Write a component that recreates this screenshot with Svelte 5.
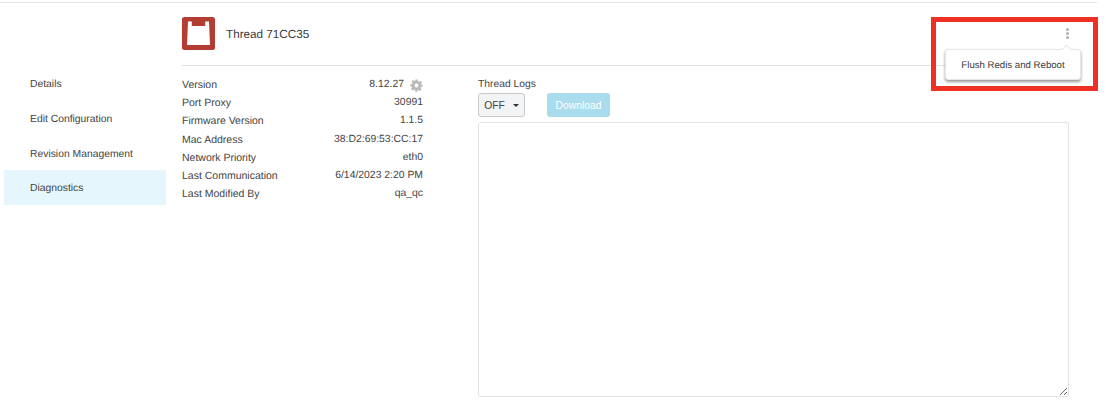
<script>
  const nav = ['Details', 'Edit Configuration', 'Revision Management', 'Diagnostics'];
  const rows = [
    ['Version', '8.12.27'],
    ['Port Proxy', '30991'],
    ['Firmware Version', '1.1.5'],
    ['Mac Address', '38:D2:69:53:CC:17'],
    ['Network Priority', 'eth0'],
    ['Last Communication', '6/14/2023 2:20 PM'],
    ['Last Modified By', 'qa_qc']
  ];
</script>

<div class="page">
  <div class="topline"></div>
  <div class="layout">
    <nav class="sidebar">
      {#each nav as item}
        <div class="nav-item" class:active={item === 'Diagnostics'}>{item}</div>
      {/each}
    </nav>
    <main class="main">
      <header class="header">
        <div class="device">
          <svg viewBox="0 0 33 33" width="33" height="33" aria-hidden="true">
            <rect width="33" height="33" rx="2.5" fill="#b33c33" />
            <path d="M6 4.5h3.8V9h13.4V4.5H27L28 28H5Z" fill="#fff" />
          </svg>
          <span class="title">Thread 71CC35</span>
        </div>
        <div class="dots"><i></i><i></i><i></i></div>
      </header>
      <div class="content">
        <section class="details">
          {#each rows as [label, value]}
            <div class="row">
              <span>{label}</span>
              <span class="value">
                {value}
                {#if label === 'Version'}
                  <svg class="gear" viewBox="0 0 24 24" width="13" height="13" aria-hidden="true">
                    <path fill-rule="evenodd" fill="#bababa" d="M10 1h4l.7 3.2 1.9.8 2.8-1.8 2.8 2.8-1.8 2.8.8 1.9L23.5 10v4l-3.2.7-.8 1.9 1.8 2.8-2.8 2.8-2.8-1.8-1.9.8L13.9 23.5h-4l-.7-3.3-1.9-.8-2.8 1.8-2.8-2.8 1.8-2.8-.8-1.9L.5 14v-4l3.2-.7.8-1.9L2.7 4.6l2.8-2.8 2.8 1.8 1.9-.8ZM12 8.5a3.5 3.5 0 1 0 0 7 3.5 3.5 0 0 0 0-7Z" />
                  </svg>
                {/if}
              </span>
            </div>
          {/each}
        </section>
        <section class="logs">
          <div class="logs-label">Thread Logs</div>
          <div class="controls">
            <button class="select">OFF <span class="caret"></span></button>
            <button class="download">Download</button>
          </div>
          <textarea class="log-box"></textarea>
        </section>
      </div>
    </main>
  </div>

  <div class="highlight"></div>
  <div class="menu">
    <span class="arrow"></span>
    Flush Redis and Reboot
  </div>
</div>

<style>
  :global(body) {
    margin: 0;
    background: #fff;
  }
  .page {
    position: relative;
    width: 1106px;
    height: 411px;
    overflow: hidden;
    background: #fff;
    color: #444;
    font-family: "Liberation Sans", Arial, sans-serif;
    font-size: 10.5px;
    text-rendering: geometricPrecision;
  }
  .topline {
    height: 1px;
    width: 1097px;
    margin-top: 2px;
    background: #e4e4e4;
  }
  .layout {
    display: flex;
  }
  .sidebar {
    width: 162px;
    margin-left: 4px;
    padding-top: 62px;
    flex: none;
  }
  .nav-item {
    height: 35px;
    line-height: 40px;
    padding-left: 26px;
    font-size: 10.35px;
  }
  .nav-item.active {
    background: #e5f7fc;
    line-height: 37px;
  }
  .main {
    width: 887px;
    margin-left: 16px;
  }
  .header {
    height: 63px;
    box-sizing: border-box;
    border-bottom: 1px solid #e2e2e2;
    display: flex;
    justify-content: space-between;
    padding-top: 14px;
  }
  .device {
    display: flex;
    align-items: flex-start;
    gap: 11px;
  }
  .title {
    font-size: 11.7px;
    line-height: 35px;
    color: #3a3a3a;
  }
  .dots {
    display: flex;
    flex-direction: column;
    gap: 1px;
    padding: 11px 0 0;
    margin-right: 0;
  }
  .dots i {
    width: 3px;
    height: 3px;
    border-radius: 50%;
    background: #b0b0b0;
  }
  .content {
    display: flex;
    padding-top: 9px;
  }
  .details {
    width: 241px;
    margin-right: 55px;
    padding-top: 1px;
    flex: none;
  }
  .row {
    height: 18.2px;
    line-height: 18.2px;
    display: flex;
    justify-content: space-between;
  }
  .value {
    display: flex;
    align-items: center;
    gap: 6px;
    font-size: 10.4px;
  }
  .gear {
    flex: none;
  }
  .logs {
    flex: 1;
  }
  .logs-label {
    height: 18px;
    line-height: 20px;
    font-size: 10.3px;
  }
  .controls {
    display: flex;
    gap: 22px;
    height: 29px;
  }
  button {
    font: inherit;
    box-sizing: border-box;
    padding: 0;
  }
  .select {
    width: 47px;
    height: 24px;
    font-size: 10.3px;
    background: #f3f4f6;
    border: 1px solid #c9c9c9;
    border-radius: 3px;
    color: #444;
  }
  .caret {
    display: inline-block;
    width: 0;
    height: 0;
    margin-left: 5px;
    vertical-align: 2px;
    border: 3px solid transparent;
    border-top-color: #333;
    border-bottom-width: 0;
  }
  .download {
    width: 63px;
    height: 24px;
    background: #a9dcec;
    border: 0;
    border-radius: 3px;
    color: #fff;
    font-size: 10.3px;
  }
  .log-box {
    display: block;
    box-sizing: border-box;
    width: 100%;
    height: 275px;
    border: 1px solid #e2e2e2;
    border-radius: 3px;
    outline: 0;
    background: #fff;
    margin: 0;
  }
  .highlight {
    position: absolute;
    left: 931px;
    top: 17px;
    width: 167px;
    height: 74px;
    box-sizing: border-box;
    border: 5px solid #ee3124;
    pointer-events: none;
  }
  .menu {
    position: absolute;
    left: 945px;
    top: 49px;
    width: 136px;
    height: 31px;
    line-height: 31px;
    text-align: center;
    background: #fff;
    border: 1px solid #e6e6e6;
    border-radius: 3px;
    box-sizing: border-box;
    box-shadow: 0 2px 3px rgba(0, 0, 0, 0.4);
    font-size: 9.65px;
    color: #3a3a3a;
  }
  .arrow {
    position: absolute;
    right: 10px;
    top: -4px;
    width: 6px;
    height: 6px;
    background: #fff;
    border-left: 1px solid #e6e6e6;
    border-top: 1px solid #e6e6e6;
    transform: rotate(45deg);
  }
</style>
